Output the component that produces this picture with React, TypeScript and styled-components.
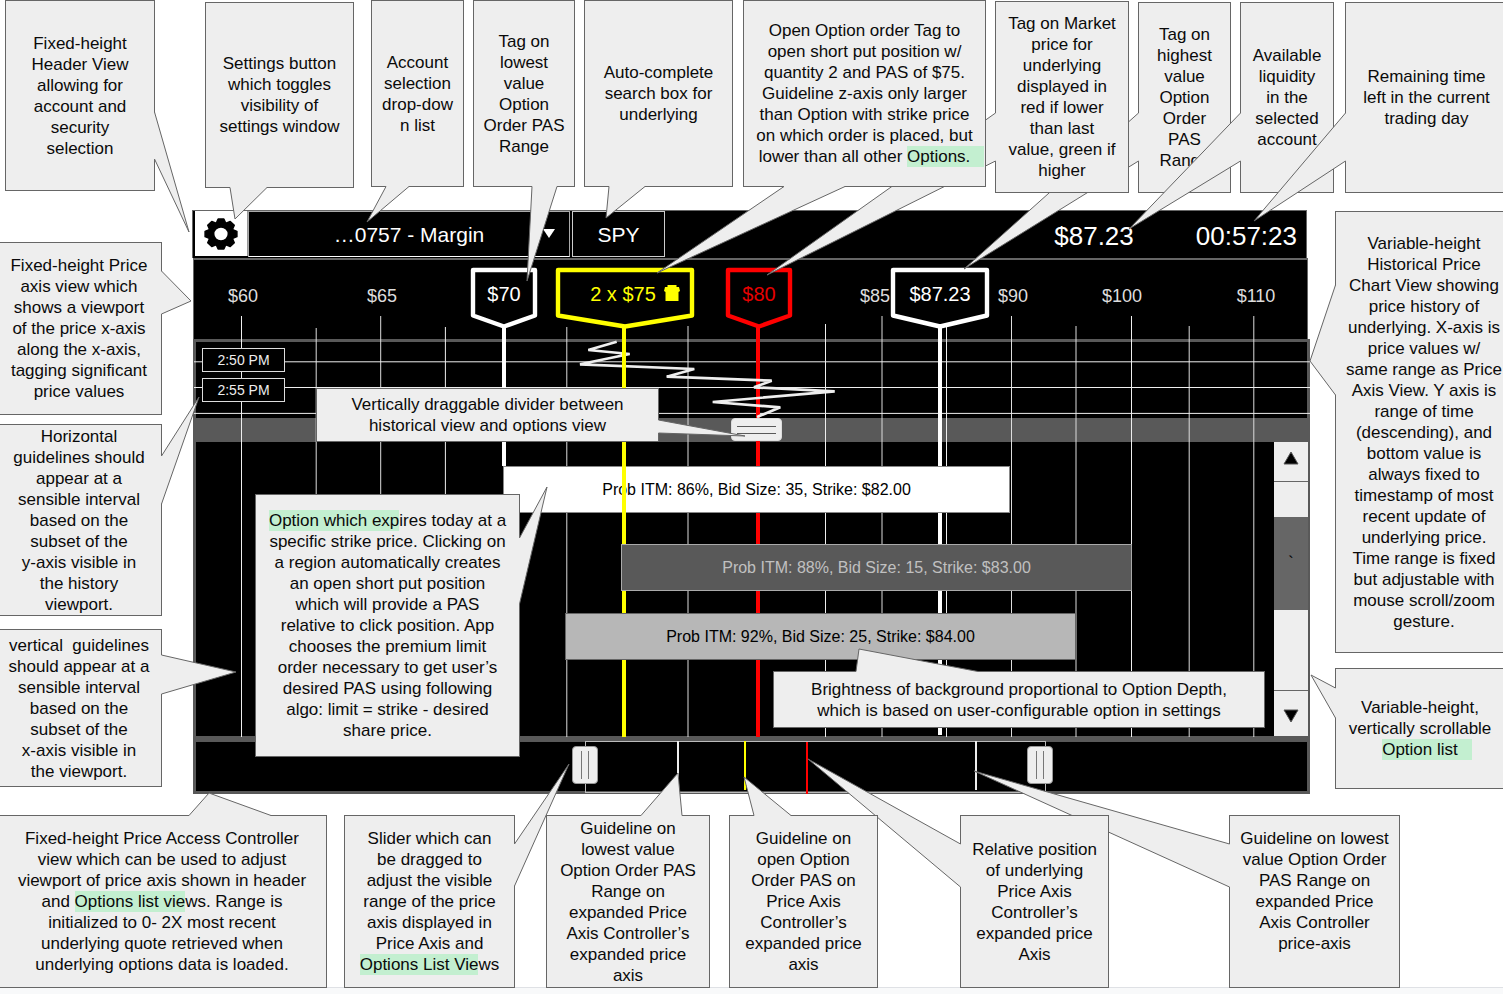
import React from "react";
import styled, { createGlobalStyle, css } from "styled-components";

const GlobalStyle = createGlobalStyle`
  * { box-sizing: border-box; }
  body {
    margin: 0;
    background: #ffffff;
    color: #0a0a0a;
    font-family: "Liberation Sans", Arial, sans-serif;
    overflow-x: hidden;
  }
  button, input, select { font: inherit; margin: 0; padding: 0; border: 0; border-radius: 0; }
`;

const ink = "#666666";
const frame = "#595959";
const paper = "#eeeeee";

/* ---------- annotation notes ---------- */

type Side = "top" | "right" | "bottom" | "left";
interface Tail {
  side: Side;
  from: number;
  to: number;
  tip: [number, number];
}

const noteBox = css<{ $h: number; $z?: number }>`
  position: relative;
  z-index: ${(p) => p.$z ?? 2};
  display: flex;
  align-items: center;
  justify-content: center;
  min-height: ${(p) => p.$h}px;
  background: ${paper};
  border: 1px solid ${ink};
  font-size: 17px;
  line-height: 21px;
  text-align: center;
  white-space: pre;
`;

const RowNote = styled.aside<{ $w: number; $h: number; $gap?: number; $drop?: number; $z?: number }>`
  ${noteBox}
  flex: ${(p) => p.$w} 1 ${(p) => p.$w}px;
  min-width: 0;
  margin-left: ${(p) => p.$gap ?? 0}px;
  margin-top: ${(p) => p.$drop ?? 0}px;
`;

const SideNote = styled.aside<{ $h: number; $gap?: number; $bleedLeft?: number; $bleedRight?: number; $z?: number }>`
  ${noteBox}
  margin-top: ${(p) => p.$gap ?? 0}px;
  margin-left: -${(p) => p.$bleedLeft ?? 0}px;
  margin-right: -${(p) => p.$bleedRight ?? 0}px;
`;

const FloatNote = styled.aside<{ $x: number; $y: number; $w: number; $h: number; $z?: number }>`
  ${noteBox}
  position: absolute;
  left: ${(p) => (p.$x / 1118) * 100}%;
  top: ${(p) => p.$y}px;
  width: ${(p) => p.$w}px;
`;

const TailSvg = styled.svg<{ $side: Side }>`
  position: absolute;
  overflow: visible;
  pointer-events: none;
  width: 1px;
  height: 1px;
  left: ${(p) => (p.$side === "right" ? "calc(100% + 1px)" : "-1px")};
  top: ${(p) => (p.$side === "bottom" ? "calc(100% + 1px)" : "-1px")};
`;

function Pointer({ side, from, to, tip }: Tail) {
  const sign = side === "right" || side === "bottom" ? -1 : 1;
  const at = (v: number, depth: number) =>
    side === "left" || side === "right" ? `${sign * depth},${v}` : `${v},${sign * depth}`;
  const edge = `${at(from, 0.5)} ${tip.join(",")} ${at(to, 0.5)}`;
  return (
    <TailSvg $side={side} aria-hidden="true">
      <polygon points={`${at(from, 1.5)} ${edge} ${at(to, 1.5)}`} fill={paper} />
      <polyline points={edge} fill="none" stroke={ink} strokeWidth="1" />
    </TailSvg>
  );
}

const Mark = styled.mark<{ $trail?: boolean }>`
  padding: 1px 0;
  color: inherit;
  background: #c3efd0;
  ${(p) => p.$trail && "padding-right: 14px; margin-right: -14px;"}
`;

/* ---------- page layout ---------- */

const Page = styled.main`
  min-width: 1280px;
  overflow: hidden;
`;

const TopNotes = styled.section`
  display: flex;
  align-items: flex-start;
  min-height: 210px;
  padding-left: 5px;
  margin-right: -5px;
`;

const Middle = styled.section`
  display: grid;
  grid-template-columns: minmax(0, 162fr) 30px minmax(0, 1118fr) 25px minmax(0, 168fr);
  align-items: start;
`;

const LeftNotes = styled.div`
  grid-column: 1;
  display: flex;
  flex-direction: column;
  padding-top: 32px;
`;

const RightNotes = styled.div`
  grid-column: 5;
  display: flex;
  flex-direction: column;
  padding-top: 1px;
`;

const BottomNotes = styled.section`
  display: flex;
  align-items: flex-start;
  margin-top: 21px;
  margin-left: -3px;
`;

const RowRest = styled.div`
  flex: 103 1 103px;
`;

const Baseline = styled.footer`
  height: 7px;
  margin-top: -1px;
  background: #f8f9fa;
  border-top: 1px solid #dfe1e5;
`;

/* ---------- trading window ---------- */

const Window = styled.div`
  grid-column: 3;
  position: relative;
  display: flex;
  flex-direction: column;
`;

const Header = styled.header`
  display: flex;
  align-items: stretch;
  height: 48px;
  margin-right: 3px;
  padding: 0 9px 1px 2px;
  background: #000;
  color: #fff;
  border: 1px solid ${ink};
  border-bottom: 0;
`;

const SettingsButton = styled.button`
  display: flex;
  align-items: center;
  justify-content: center;
  width: 53px;
  margin-bottom: 1px;
  background: #fff;
  border-right: 1px solid #999;
`;

const AccountField = styled.label`
  position: relative;
  flex: 0 0 322px;
  display: flex;
`;

const AccountSelect = styled.select`
  width: 100%;
  appearance: none;
  background: #000;
  color: #fff;
  border: 1px solid #aaa;
  border-bottom-color: #fff;
  font-size: 21px;
  text-align: center;
  text-align-last: center;
`;

const SelectArrow = styled.svg`
  position: absolute;
  right: 15px;
  top: 17px;
  pointer-events: none;
`;

const SearchInput = styled.input`
  width: 93px;
  margin-left: 2px;
  padding-top: 2px;
  background: #000;
  color: #fff;
  border: 1px solid #ccc;
  font-size: 21px;
  text-align: center;
`;

const HeaderFigures = styled.div`
  display: flex;
  align-items: center;
  gap: 62px;
  margin-left: auto;
  padding-top: 4px;
  font-size: 26px;
  line-height: 28px;
`;

const X0 = 193;
const SPAN = 1117;
const pct = (x: number) => `${((x - X0) / SPAN) * 100}%`;
const pctW = (w: number) => `${(w / SPAN) * 100}%`;

const Stack = styled.div`
  position: relative;
  margin-left: 1px;
`;

const AxisPane = styled.div`
  height: 81px;
  margin-right: 2px;
  background: #000;
  border: 1px solid ${ink};
  border-top-width: 2px;
  border-bottom: 0;
`;

const HistoryPane = styled.div`
  display: flex;
  flex-direction: column;
  align-items: flex-start;
  gap: 6px;
  height: 79px;
  padding: 6px;
  background: #000;
  border: 3px solid ${frame};
  border-bottom: 0;
`;

const TimeLabel = styled.time`
  position: relative;
  z-index: 1;
  width: 83px;
  height: 24px;
  background: #000;
  border: 1px solid #ddd;
  color: #eee;
  font-size: 14px;
  line-height: 23px;
  text-align: center;
`;

const Divider = styled.div`
  height: 24px;
  background: ${frame};
`;

const DividerHandle = styled.button`
  position: relative;
  z-index: 1;
  display: flex;
  flex-direction: column;
  justify-content: center;
  gap: 6px;
  width: 51px;
  height: 23px;
  margin-left: ${pct(731)};
  padding: 0 5px;
  background: ${paper};
  border: 1px solid #ddd;
  border-radius: 4px;
  cursor: row-resize;

  span { height: 1px; background: ${frame}; }
`;

const OptionsPane = styled.div`
  display: flex;
  height: 297px;
  background: #000;
  border: 3px solid ${frame};
  border-top: 0;
  border-right-width: 2px;
`;

const OptionList = styled.ul`
  flex: 1;
  list-style: none;
  margin: 0 -36px 0 -3px;
  padding: 24px 0 0;
`;

const OptionRow = styled.li<{ $gap: number }>`
  display: flex;
  margin-bottom: ${(p) => p.$gap}px;
`;

type Tone = "bright" | "dark" | "mid";
const tones: Record<Tone, { bg: string; line: string; fg: string }> = {
  bright: { bg: "#ffffff", line: "#888888", fg: "#000000" },
  dark: { bg: "#595959", line: "#aaaaaa", fg: "#c0c0c0" },
  mid: { bg: "#b7b7b7", line: "#666666", fg: "#000000" },
};

const OptionBar = styled.button<{ $x: number; $w: number; $tone: Tone }>`
  position: relative;
  z-index: 1;
  flex: none;
  height: 47px;
  margin-left: ${(p) => pctW(p.$x - X0)};
  width: ${(p) => pctW(p.$w)};
  background: ${(p) => tones[p.$tone].bg};
  border: 1px solid ${(p) => tones[p.$tone].line};
  color: ${(p) => tones[p.$tone].fg};
  font-size: 16px;
  text-align: center;
`;

const Scrollbar = styled.div`
  position: relative;
  z-index: 1;
  display: flex;
  flex-direction: column;
  width: 34px;
  background: ${paper};
`;

const ScrollButton = styled.button<{ $end?: boolean }>`
  display: flex;
  justify-content: center;
  align-items: flex-start;
  height: ${(p) => (p.$end ? 46 : 40)}px;
  padding-top: ${(p) => (p.$end ? 18 : 9)}px;
  background: ${paper};
  border-${(p) => (p.$end ? "top" : "bottom")}: 1px solid ${ink};
`;

const ScrollTrack = styled.div`
  flex: 1;
  padding-top: 35px;
`;

const ScrollThumb = styled.div`
  height: 93px;
  background: #666;
  color: #000;
  font-size: 16px;
  line-height: 91px;
  text-align: center;
`;

const Lines = styled.svg`
  position: absolute;
  left: 0;
  top: 0;
  width: 100%;
  height: 480px;
  pointer-events: none;
`;

const LinesFront = styled(Lines)`
  z-index: 1;
`;

const AxisLabel = styled.span<{ $x: number }>`
  position: absolute;
  left: ${(p) => pct(p.$x)};
  top: 28px;
  width: 60px;
  margin-left: -30px;
  color: #dddddd;
  font-size: 18px;
  line-height: 20px;
  text-align: center;
`;

const Tag = styled.div<{ $x: number; $w: number; $color: string; $icon?: boolean }>`
  position: absolute;
  left: ${(p) => pct(p.$x)};
  top: 10px;
  width: ${(p) => p.$w}px;
  height: 62px;
  margin-left: -${(p) => p.$w / 2}px;
  display: flex;
  justify-content: center;
  align-items: flex-start;
  gap: 8px;
  padding-top: 14px;
  padding-left: ${(p) => (p.$icon ? 20 : 0)}px;
  color: ${(p) => p.$color};
  font-size: 20px;
  line-height: 24px;
`;

const TagShape = styled.svg`
  position: absolute;
  left: 0;
  top: 0;
  overflow: visible;
`;

const TagText = styled.span`
  position: relative;
`;

const DeleteButton = styled.button`
  position: relative;
  display: block;
  width: 16px;
  height: 16px;
  margin-top: 3px;
  background: none;
`;

function PriceTag({ x, w, color, text, line, onDelete }: {
  x: number; w: number; color: string; text: string; line: string; onDelete?: boolean;
}) {
  return (
    <Tag $x={x} $w={w} $color={color} $icon={onDelete}>
      <TagShape width={w} height="62" aria-hidden="true">
        <polygon
          points={`2,2 ${w - 2},2 ${w - 2},47.5 ${w / 2},58.5 2,47.5`}
          fill="#000"
          stroke={line}
          strokeWidth="4.4"
          strokeLinejoin="round"
        />
      </TagShape>
      <TagText>{text}</TagText>
      {onDelete && (
        <DeleteButton aria-label="Delete order">
          <svg width="16" height="16" viewBox="0 0 16 16" display="block">
            <path d="M3.5 0h9v2H15l1 4-1.500 1v9h-13V7L0 6l1-4h2.500z" fill={line} />
          </svg>
        </DeleteButton>
      )}
    </Tag>
  );
}

const Controller = styled.div`
  position: relative;
  height: 55px;
  margin-left: 1px;
  background: #000;
  border: 3px solid ${frame};
`;

const RangeLines = styled.svg`
  position: absolute;
  left: -3px;
  top: -3px;
  width: calc(100% + 6px);
  height: 55px;
`;

const RangeInput = styled.input`
  position: absolute;
  left: 0;
  top: 0;
  width: 100%;
  height: 46px;
  appearance: none;
  background: none;
  pointer-events: none;

  &::-webkit-slider-thumb {
    appearance: none;
    pointer-events: auto;
    width: 26px;
    height: 38px;
    border: 1px solid #999;
    border-radius: 4px;
    background:
      linear-gradient(#777, #777) 8px 4px / 1px 28px no-repeat,
      linear-gradient(#777, #777) 15px 4px / 1px 28px no-repeat,
      ${paper};
    cursor: col-resize;
  }
`;

const gridLines: [number, number, string][] = [
  [241.5, 316, "#eee"], [316.2, 328, "#ddd"], [380.7, 316, "#ddd"], [445.4, 327, "#eee"],
  [566.8, 327, "#ddd"], [688, 326, "#ddd"], [825.5, 324, "#eee"], [882, 316, "#ddd"],
  [946.5, 316, "#eee"], [1011.5, 316, "#ddd"], [1076, 326, "#ddd"], [1131.5, 316, "#eee"],
  [1189.2, 326, "#ddd"], [1253.8, 316, "#ddd"],
];

const axisLabels: [number, string][] = [
  [243, "$60"], [382, "$65"], [875, "$85"], [1013, "$90"], [1122, "$100"], [1256, "$110"],
];

const Gear = () => (
  <svg width="36" height="34" viewBox="-18 -17 36 34" aria-hidden="true">
    <g transform="scale(1.06 1)">
      <g fill="#000" stroke="#000" strokeWidth="1.4" strokeLinejoin="round">
        {[0, 45, 90, 135, 180, 225, 270, 315].map((a) => (
          <path key={a} transform={`rotate(${a})`} d="M-4.6-10.500-2.700-15H2.700L4.600-10.500z" />
        ))}
      </g>
      <circle r="9.2" fill="none" stroke="#000" strokeWidth="6" />
    </g>
  </svg>
);

export default function App() {
  return (
    <Page>
      <GlobalStyle />

      <TopNotes>
        <RowNote $w={150} $h={191}>
          <Pointer side="right" from={112} to={159} tip={[34, 232]} />
          <span>{"Fixed-height\nHeader View\nallowing for\naccount and\nsecurity\nselection"}</span>
        </RowNote>
        <RowNote $w={149} $h={186} $gap={50} $drop={2}>
          <Pointer side="bottom" from={25} to={62} tip={[30, 31]} />
          <span>{"Settings button\nwhich toggles\nvisibility of\nsettings window"}</span>
        </RowNote>
        <RowNote $w={93} $h={187} $gap={17}>
          <Pointer side="bottom" from={15} to={38} tip={[-4, 35]} />
          <span>{"Account\nselection\ndrop-dow\nn list"}</span>
        </RowNote>
        <RowNote $w={102} $h={187} $gap={9}>
          <Pointer side="bottom" from={59} to={84} tip={[54, 94]} />
          <span>{"Tag on\nlowest\nvalue\nOption\nOrder PAS\nRange"}</span>
        </RowNote>
        <RowNote $w={149} $h={187} $gap={9}>
          <Pointer side="bottom" from={25} to={61} tip={[22, 31]} />
          <span>{"Auto-complete\nsearch box for\nunderlying"}</span>
        </RowNote>
        <RowNote $w={243} $h={187} $gap={10} $z={5}>
          <Pointer side="bottom" from={41} to={102} tip={[-86, 86]} />
          <span>
            {"Open Option order Tag to\nopen short put position w/\nquantity 2 and PAS of $75.\nGuideline z-axis only larger\nthan Option with strike price\non which order is placed, but\nlower than all other "}
            <Mark $trail>Options.</Mark>
          </span>
        </RowNote>
        <RowNote $w={134} $h={192} $gap={9} $drop={1} $z={4}>
          <Pointer side="left" from={112} to={160} tip={[-228, 274]} />
          <span>{"Tag on Market\nprice for\nunderlying\ndisplayed in\nred if lower\nthan last\nvalue, green if\nhigher"}</span>
        </RowNote>
        <RowNote $w={93} $h={191} $gap={9} $drop={2} $z={3}>
          <Pointer side="left" from={111} to={159} tip={[-174, 267]} />
          <span>{"Tag on\nhighest\nvalue\nOption\nOrder\nPAS\nRange"}</span>
        </RowNote>
        <RowNote $w={94} $h={191} $gap={9} $drop={2} $z={4}>
          <Pointer side="left" from={111} to={159} tip={[-111, 227]} />
          <span>{"Available\nliquidity\nin the\nselected\naccount"}</span>
        </RowNote>
        <RowNote $w={163} $h={191} $gap={11} $drop={2} $z={5}>
          <Pointer side="left" from={111} to={159} tip={[-91, 219]} />
          <span>{"Remaining time\nleft in the current\ntrading day"}</span>
        </RowNote>
      </TopNotes>

      <Middle>
        <LeftNotes>
          <SideNote $h={173} $bleedLeft={4}>
            <Pointer side="right" from={29} to={72} tip={[29, 59]} />
            <span>{"Fixed-height Price\naxis view which\nshows a viewport\nof the price x-axis\nalong the x-axis,\ntagging significant\nprice values"}</span>
          </SideNote>
          <SideNote $h={192} $gap={9} $bleedLeft={4}>
            <Pointer side="right" from={32} to={80} tip={[37, -27]} />
            <span>{"Horizontal\nguidelines should\nappear at a\nsensible interval\nbased on the\nsubset of the\ny-axis visible in\nthe history\nviewport."}</span>
          </SideNote>
          <SideNote $h={158} $gap={13} $bleedLeft={4}>
            <Pointer side="right" from={26} to={65} tip={[74, 43]} />
            <span>{"vertical  guidelines\nshould appear at a\nsensible interval\nbased on the\nsubset of the\nx-axis visible in\nthe viewport."}</span>
          </SideNote>
        </LeftNotes>

        <Window>
          <Header>
            <SettingsButton aria-label="Settings"><Gear /></SettingsButton>
            <AccountField>
              <AccountSelect aria-label="Account" defaultValue="0757">
                <option value="0757">…0757 - Margin</option>
              </AccountSelect>
              <SelectArrow width="12" height="11" aria-hidden="true">
                <path d="M0 1H12L6 10z" fill="#fff" />
              </SelectArrow>
            </AccountField>
            <SearchInput aria-label="Underlying" defaultValue="SPY" />
            <HeaderFigures>
              <span>$87.23</span>
              <time>00:57:23</time>
            </HeaderFigures>
          </Header>

          <Stack>
            <AxisPane />
            <HistoryPane>
              <TimeLabel>2:50 PM</TimeLabel>
              <TimeLabel>2:55 PM</TimeLabel>
            </HistoryPane>
            <Divider>
              <DividerHandle aria-label="Resize views"><span /><span /></DividerHandle>
            </Divider>
            <OptionsPane>
              <OptionList>
                <OptionRow $gap={31}>
                  <OptionBar $x={503} $w={507} $tone="bright">Prob ITM: 86%, Bid Size: 35, Strike: $82.00</OptionBar>
                </OptionRow>
                <OptionRow $gap={22}>
                  <OptionBar $x={621} $w={511} $tone="dark">Prob ITM: 88%, Bid Size: 15, Strike: $83.00</OptionBar>
                </OptionRow>
                <OptionRow $gap={0}>
                  <OptionBar $x={565} $w={511} $tone="mid">Prob ITM: 92%, Bid Size: 25, Strike: $84.00</OptionBar>
                </OptionRow>
              </OptionList>
              <Scrollbar>
                <ScrollButton aria-label="Scroll up">
                  <svg width="16" height="14" aria-hidden="true"><path d="M8 1 15 13H1z" fill="#000" stroke="#555" strokeWidth="1" /></svg>
                </ScrollButton>
                <ScrollTrack>
                  <ScrollThumb>`</ScrollThumb>
                </ScrollTrack>
                <ScrollButton $end aria-label="Scroll down">
                  <svg width="16" height="14" aria-hidden="true"><path d="M8 13 1 1H15z" fill="#000" stroke="#555" strokeWidth="1" /></svg>
                </ScrollButton>
              </Scrollbar>
            </OptionsPane>

            <Lines viewBox="193 258 1117 480" preserveAspectRatio="none" aria-hidden="true">
              {gridLines.map(([x, y, c]) => (
                <line key={x} x1={x} x2={x} y1={y} y2="737" stroke={c} strokeWidth="1" />
              ))}
              {[361.8, 387.5, 413.4].map((y) => (
                <line key={y} x1="194" x2="1310" y1={y} y2={y} stroke="#eee" strokeWidth="1" />
              ))}
              <path d="M504 327V466M940 328V735" stroke="#fff" strokeWidth="4" />
              <path d="M758 327V737" stroke="#f00" strokeWidth="4" />
              <polyline
                points="616.7,341.7 588.3,350 629.7,354 580,364.3 694.3,369 666.7,376.7 771.7,380.7 754,387.3 834.7,391.3 712.7,402 780.3,407.3 757,417"
                fill="none" stroke="#eee" strokeWidth="2.7" strokeLinejoin="bevel"
              />
              <path d="M624 326V737" stroke="#ff0" strokeWidth="4" />
            </Lines>
            <LinesFront viewBox="193 258 1117 480" preserveAspectRatio="none" aria-hidden="true">
              <path d="M624 460V544" stroke="#ff0" strokeWidth="4" />
            </LinesFront>

            {axisLabels.map(([x, t]) => <AxisLabel key={t} $x={x}>{t}</AxisLabel>)}
            <PriceTag x={504} w={66} color="#fff" line="#fff" text="$70" />
            <PriceTag x={625} w={138} color="#ff0" line="#ff0" text="2 x $75" onDelete />
            <PriceTag x={759} w={66} color="#e60000" line="#f00" text="$80" />
            <PriceTag x={940} w={98} color="#fff" line="#fff" text="$87.23" />
          </Stack>

          <Controller>
            <RangeLines viewBox="193 739 1117 55" preserveAspectRatio="none" aria-hidden="true">
              <rect x="585.5" y="741.5" width="460" height="51" fill="none" stroke="#bbb" />
              <path d="M678 741V790M976 741V790" stroke="#eee" strokeWidth="2" />
              <path d="M745 741V790" stroke="#ff0" strokeWidth="2" />
              <path d="M807 742V794" stroke="#f00" strokeWidth="2" />
            </RangeLines>
            <RangeInput type="range" aria-label="Lowest visible price" min="0" max="100" step="0.01" defaultValue="34.65" />
            <RangeInput type="range" aria-label="Highest visible price" min="0" max="100" step="0.01" defaultValue="76.6" />
          </Controller>

          <FloatNote $x={124} $y={178} $w={343} $h={54}>
            <Pointer side="right" from={32} to={45} tip={[86, 48]} />
            <span>{"Vertically draggable divider between\nhistorical view and options view"}</span>
          </FloatNote>
          <FloatNote $x={63} $y={284} $w={265} $h={263}>
            <Pointer side="right" from={44} to={110} tip={[27, -7]} />
            <span>
              <Mark>Option which exp</Mark>
              {"ires today at a\nspecific strike price. Clicking on\na region automatically creates\nan open short put position\nwhich will provide a PAS\nrelative to click position. App\nchooses the premium limit\norder necessary to get user’s\ndesired PAS using following\nalgo: limit = strike - desired\nshare price."}
            </span>
          </FloatNote>
          <FloatNote $x={581} $y={461} $w={492} $h={57}>
            <Pointer side="top" from={83} to={205} tip={[86, -22]} />
            <span>{"Brightness of background proportional to Option Depth,\nwhich is based on user-configurable option in settings"}</span>
          </FloatNote>
        </Window>

        <RightNotes>
          <SideNote $h={442} $bleedRight={10}>
            <Pointer side="left" from={74} to={184} tip={[-25, 150]} />
            <span>{"Variable-height\nHistorical Price\nChart View showing\nprice history of\nunderlying. X-axis is\nprice values w/\nsame range as Price\nAxis View. Y axis is\nrange of time\n(descending), and\nbottom value is\nalways fixed to\ntimestamp of most\nrecent update of\nunderlying price.\nTime range is fixed\nbut adjustable with\nmouse scroll/zoom\ngesture."}</span>
          </SideNote>
          <SideNote $h={121} $gap={15} $bleedRight={2}>
            <Pointer side="left" from={20} to={50} tip={[-24, 7]} />
            <span>
              {"Variable-height,\nvertically scrollable\n"}
              <Mark $trail>Option list</Mark>
            </span>
          </SideNote>
        </RightNotes>
      </Middle>

      <BottomNotes>
        <RowNote $w={330} $h={173}>
          <Pointer side="top" from={192} to={274} tip={[212, -22]} />
          <span>
            {"Fixed-height Price Access Controller\nview which can be used to adjust\nviewport of price axis shown in header\nand "}
            <Mark>Options list vie</Mark>
            {"ws. Range is\ninitialized to 0- 2X most recent\nunderlying quote retrieved when\nunderlying options data is loaded."}
          </span>
        </RowNote>
        <RowNote $w={171} $h={173} $gap={17}>
          <Pointer side="right" from={29} to={71} tip={[54, -51]} />
          <span>
            {"Slider which can\nbe dragged to\nadjust the visible\nrange of the price\naxis displayed in\nPrice Axis and\n"}
            <Mark>Options List Vie</Mark>ws
          </span>
        </RowNote>
        <RowNote $w={164} $h={173} $gap={31}>
          <Pointer side="top" from={95} to={136} tip={[132, -42]} />
          <span>{"Guideline on\nlowest value\nOption Order PAS\nRange on\nexpanded Price\nAxis Controller’s\nexpanded price\naxis"}</span>
        </RowNote>
        <RowNote $w={149} $h={173} $gap={19} $z={5}>
          <Pointer side="top" from={25} to={62} tip={[15, -38]} />
          <span>{"Guideline on\nopen Option\nOrder PAS on\nPrice Axis\nController’s\nexpanded price\naxis"}</span>
        </RowNote>
        <RowNote $w={149} $h={173} $gap={82} $z={4}>
          <Pointer side="left" from={29} to={72} tip={[-152, -56]} />
          <span>{"Relative position\nof underlying\nPrice Axis\nController’s\nexpanded price\nAxis"}</span>
        </RowNote>
        <RowNote $w={171} $h={173} $gap={120} $z={3}>
          <Pointer side="left" from={29} to={72} tip={[-255, -44]} />
          <span>{"Guideline on lowest\nvalue Option Order\nPAS Range on\nexpanded Price\nAxis Controller\nprice-axis\n "}</span>
        </RowNote>
        <RowRest />
      </BottomNotes>
      <Baseline />
    </Page>
  );
}
